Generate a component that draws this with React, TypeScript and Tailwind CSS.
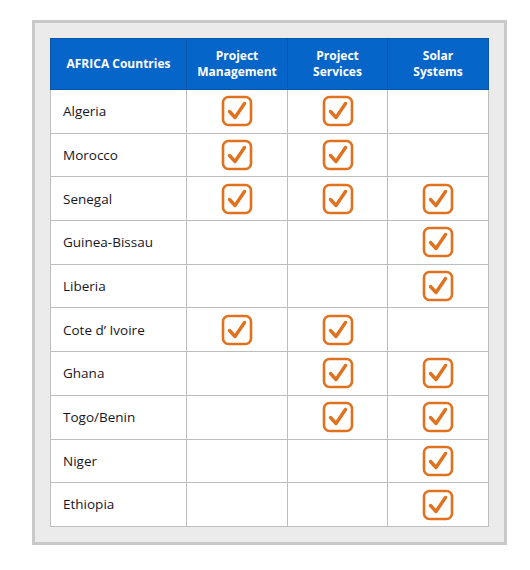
const rows: [string, boolean, boolean, boolean][] = [
  ['Algeria', true, true, false],
  ['Morocco', true, true, false],
  ['Senegal', true, true, true],
  ['Guinea-Bissau', false, false, true],
  ['Liberia', false, false, true],
  ['Cote d\u2019 Ivoire', true, true, false],
  ['Ghana', false, true, true],
  ['Togo/Benin', false, true, true],
  ['Niger', false, false, true],
  ['Ethiopia', false, false, true],
];

function Check() {
  return (
    <svg width="32" height="32" viewBox="0 0 32 32" className="mx-auto block">
      <rect x="2" y="2" width="28" height="28" rx="5.5" fill="none" stroke="#e0711f" strokeWidth="2.6" />
      <path d="M8.5 16.5 L14 22.5 L23.5 8.5" fill="none" stroke="#e0711f" strokeWidth="3.4" strokeLinecap="round" strokeLinejoin="round" />
    </svg>
  );
}

export default function App() {
  return (
    <div className="w-[530px] h-[570px] bg-white pt-5 pl-8" style={{ fontFamily: '"Open Sans", "Liberation Sans", sans-serif' }}>
      <div className="w-[475px] border-[3px] border-[#c9c9c9] bg-[#ebebeb] p-[15px]">
        <table className="w-[438px] border-collapse bg-white table-fixed">
          <colgroup>
            <col className="w-[136px]" />
            <col className="w-[101px]" />
            <col className="w-[100px]" />
            <col className="w-[101px]" />
          </colgroup>
          <thead>
            <tr className="h-[51px] bg-[#0565c8] text-white text-[12px] font-bold leading-[16px]">
              <th className="border border-[#0a55a8] font-bold">AFRICA Countries</th>
              <th className="border border-[#0a55a8] font-bold">Project<br />Management</th>
              <th className="border border-[#0a55a8] font-bold">Project<br />Services</th>
              <th className="border border-[#0a55a8] font-bold">Solar<br />Systems</th>
            </tr>
          </thead>
          <tbody>
            {rows.map(([name, a, b, c]) => (
              <tr key={name} className="h-[43.7px]">
                <td className="border border-[#bdbdbd] pl-[12px] text-[13.5px] text-[#16161f]">{name}</td>
                <td className="border border-[#bdbdbd]">{a && <Check />}</td>
                <td className="border border-[#bdbdbd]">{b && <Check />}</td>
                <td className="border border-[#bdbdbd]">{c && <Check />}</td>
              </tr>
            ))}
          </tbody>
        </table>
      </div>
    </div>
  );
}
